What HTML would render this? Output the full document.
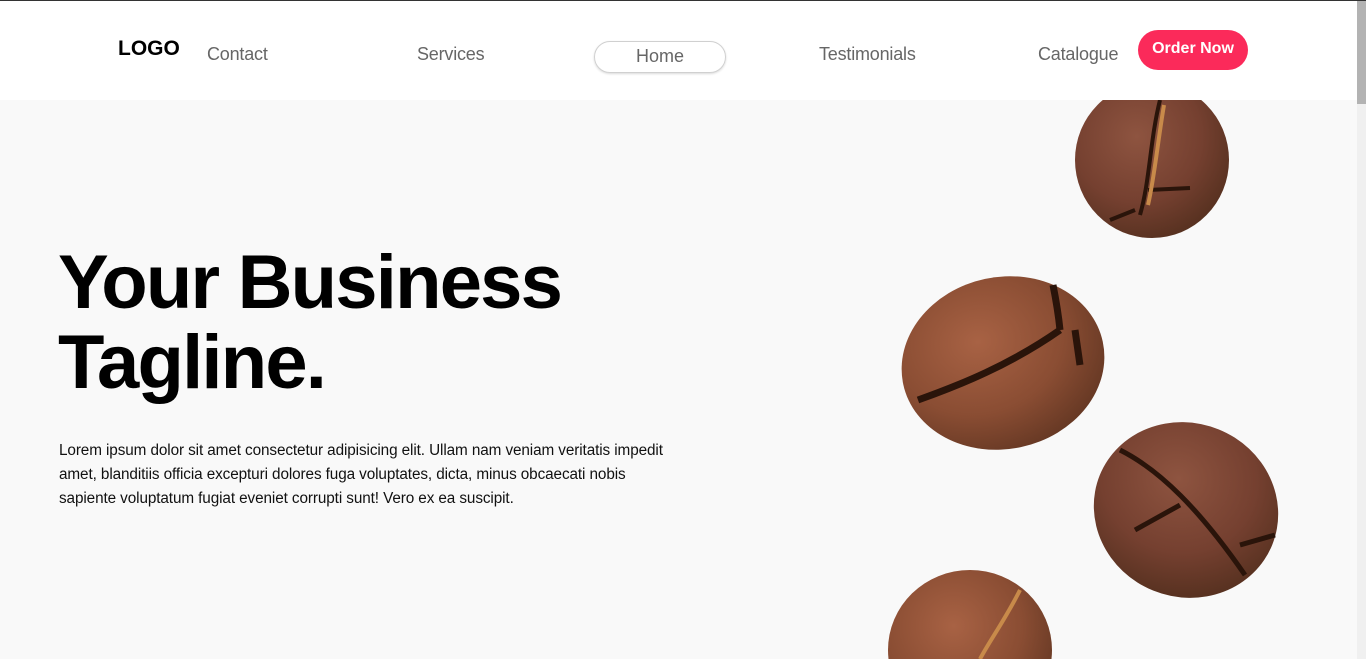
<!DOCTYPE html>
<html><head><meta charset="utf-8"><style>
*{margin:0;padding:0;box-sizing:border-box}
html,body{width:1366px;height:659px;overflow:hidden}
body{background:#f9f9f9;font-family:"Liberation Sans",sans-serif;position:relative}
.top{position:absolute;left:0;top:0;width:1366px;height:1px;background:#333}
.nav{position:absolute;top:1px;left:0;width:1357px;height:99px;background:#fff}
.logo{position:absolute;left:118px;top:36px;font-weight:bold;font-size:21px;color:#000}
.nav a{position:absolute;top:43px;font-size:18px;color:#666;text-decoration:none;letter-spacing:-0.2px}
.home{position:absolute;left:594px;top:40px;width:132px;height:32px;border:1.5px solid #d0d0d0;border-radius:16px;box-shadow:0 1px 2px rgba(0,0,0,.15);text-align:center;font-size:18px;color:#666;line-height:28px}
.btn{position:absolute;left:1138px;top:29px;width:110px;height:40px;border-radius:20px;background:#fb2a5a;color:#fff;font-weight:bold;font-size:16px;text-align:center;line-height:38px}
h1{position:absolute;left:58px;top:243px;font-size:76px;line-height:80px;font-weight:bold;color:#000;letter-spacing:-1.8px;white-space:nowrap}
p{position:absolute;left:59px;top:439px;font-size:15.3px;line-height:24px;color:#111;white-space:nowrap;letter-spacing:-0.1px}
.sb{position:absolute;right:0;top:1px;width:9px;height:658px;background:#f0f0f0}
.sb div{width:9px;height:103px;background:#b3b3b3}
svg{position:absolute;left:0;top:0}
</style></head><body>
<div class="top"></div>
<svg width="1357" height="659">
<defs>
<radialGradient id="g" cx="40%" cy="35%" r="70%"><stop offset="0" stop-color="#8e5440"/><stop offset=".6" stop-color="#754030"/><stop offset="1" stop-color="#55301f"/></radialGradient>
<radialGradient id="g2" cx="40%" cy="35%" r="70%"><stop offset="0" stop-color="#a86244"/><stop offset=".6" stop-color="#8a4d33"/><stop offset="1" stop-color="#643723"/></radialGradient>
<clipPath id="c"><rect x="0" y="100" width="1357" height="559"/></clipPath>
</defs>
<g clip-path="url(#c)">
<ellipse cx="1152" cy="160" rx="77" ry="78" fill="url(#g)"/>
<path d="M1160 100 C1150 140 1150 180 1140 215 M1135 210 L1110 220 M1148 190 L1190 188" stroke="#2a140a" stroke-width="4" fill="none"/>
<path d="M1164 105 C1158 140 1154 180 1148 205" stroke="#c88a4a" stroke-width="4" fill="none"/>
<ellipse cx="1003" cy="363" rx="102" ry="86" transform="rotate(-12 1003 363)" fill="url(#g2)"/>
<path d="M918 400 C960 385 1010 365 1060 330 M1053 285 C1058 310 1060 330 1060 330 M1075 330 L1080 365" stroke="#2a140a" stroke-width="7" fill="none"/>
<ellipse cx="1186" cy="510" rx="93" ry="87" transform="rotate(22 1186 510)" fill="url(#g)"/>
<path d="M1120 450 C1160 470 1200 510 1245 575 M1180 505 L1135 530 M1240 545 L1275 535" stroke="#2a140a" stroke-width="5" fill="none"/>
<ellipse cx="970" cy="650" rx="82" ry="80" fill="url(#g2)"/>
<path d="M1020 590 C1005 620 990 640 980 659" stroke="#c88a4a" stroke-width="4" fill="none"/>
</g>
</svg>
<div class="nav">
<div class="logo">LOGO</div>
<a style="left:207px">Contact</a>
<a style="left:417px">Services</a>
<div class="home">Home</div>
<a style="left:819px">Testimonials</a>
<a style="left:1038px">Catalogue</a>
<div class="btn">Order Now</div>
</div>
<h1>Your Business<br>Tagline.</h1>
<p>Lorem ipsum dolor sit amet consectetur adipisicing elit. Ullam nam veniam veritatis impedit<br>amet, blanditiis officia excepturi dolores fuga voluptates, dicta, minus obcaecati nobis<br>sapiente voluptatum fugiat eveniet corrupti sunt! Vero ex ea suscipit.</p>
<div class="sb"><div></div></div>
</body></html>
